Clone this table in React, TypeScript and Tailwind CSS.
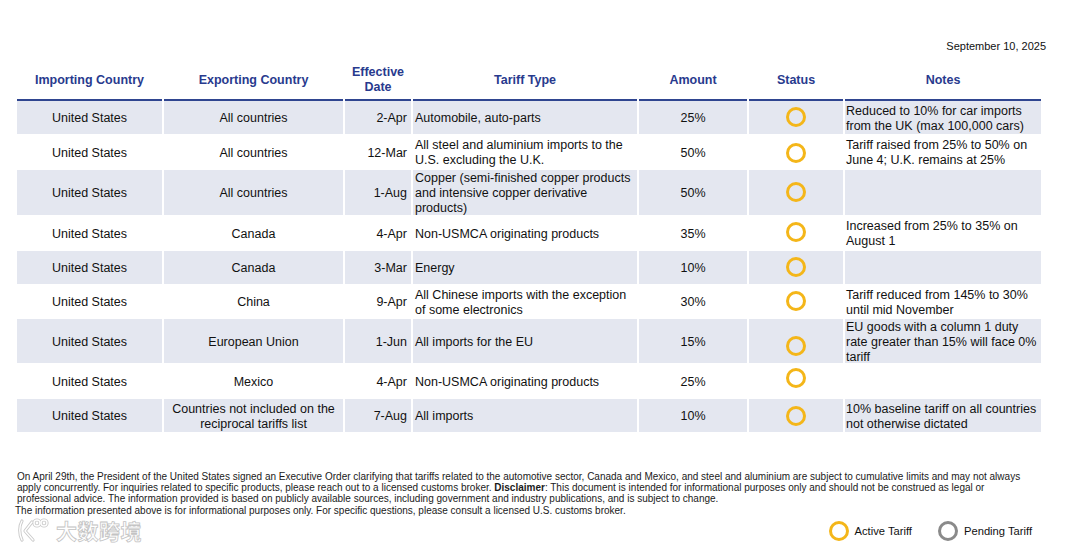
import React from 'react';

type Row = {
    imp: string;
    exp: string[];
    date: string;
    type: string[];
    amt: string;
    notes: string[];
    h: string;
    ring: string;
};

const rows: Row[] = [
    { imp: 'United States', exp: ['All countries'], date: '2-Apr', type: ['Automobile, auto-parts'], amt: '25%', notes: ['Reduced to 10% for car imports', 'from the UK (max 100,000 cars)'], h: 'h-[33px]', ring: '-mt-[4px]' },
    { imp: 'United States', exp: ['All countries'], date: '12-Mar', type: ['All steel and aluminium imports to the', 'U.S. excluding the U.K.'], amt: '50%', notes: ['Tariff raised from 25% to 50% on', 'June 4; U.K. remains at 25%'], h: 'h-[36px]', ring: '-mt-[1px]' },
    { imp: 'United States', exp: ['All countries'], date: '1-Aug', type: ['Copper (semi-finished copper products', 'and intensive copper derivative', 'products)'], amt: '50%', notes: [], h: 'h-[45px]', ring: '-mt-[4px]' },
    { imp: 'United States', exp: ['Canada'], date: '4-Apr', type: ['Non-USMCA originating products'], amt: '35%', notes: ['Increased from 25% to 35% on', 'August 1'], h: 'h-[36px]', ring: '-mt-[4px]' },
    { imp: 'United States', exp: ['Canada'], date: '3-Mar', type: ['Energy'], amt: '10%', notes: [], h: 'h-[33px]', ring: '-mt-[4px]' },
    { imp: 'United States', exp: ['China'], date: '9-Apr', type: ['All Chinese imports with the exception', 'of some electronics'], amt: '30%', notes: ['Tariff reduced from 145% to 30%', 'until mid November'], h: 'h-[35px]', ring: '-mt-[4px]' },
    { imp: 'United States', exp: ['European Union'], date: '1-Jun', type: ['All imports for the EU'], amt: '15%', notes: ['EU goods with a column 1 duty', 'rate greater than 15% will face 0%', 'tariff'], h: 'h-[44px]', ring: 'mt-[7px]' },
    { imp: 'United States', exp: ['Mexico'], date: '4-Apr', type: ['Non-USMCA originating products'], amt: '25%', notes: [], h: 'h-[36px]', ring: '-mt-[8px]' },
    { imp: 'United States', exp: ['Countries not included on the', 'reciprocal tariffs list'], date: '7-Aug', type: ['All imports'], amt: '10%', notes: ['10% baseline tariff on all countries', 'not otherwise dictated'], h: 'h-[33px]', ring: '-mt-[2px]' },
];

const Lines = ({ lines }: { lines: string[] }) => (
    <div>
        {lines.map((l) => (
            <div key={l} className="whitespace-nowrap">{l}</div>
        ))}
    </div>
);

const Ring = ({ color, className = '' }: { color: string; className?: string }) => (
    <div className={`w-5 h-5 rounded-full border-[3px] ${color} ${className}`} />
);

function Watermark() {
    return (
        <div className="flex items-center gap-[6px] opacity-90">
            <svg width="34" height="26" viewBox="0 0 34 26" fill="none">
                <g stroke="#c4c4c4" strokeWidth="3.2" strokeLinecap="round" strokeLinejoin="round">
                    <path d="M6 4 C3 9 3 17 6 23" />
                    <path d="M16 5 L9 14 L17 23" />
                    <circle cx="21" cy="6" r="3" />
                    <circle cx="28" cy="6" r="3" />
                </g>
                <g stroke="#ffffff" strokeWidth="1.4" strokeLinecap="round" strokeLinejoin="round">
                    <path d="M6 4 C3 9 3 17 6 23" />
                    <path d="M16 5 L9 14 L17 23" />
                    <circle cx="21" cy="6" r="3" />
                    <circle cx="28" cy="6" r="3" />
                </g>
            </svg>
            <span className="font-['Noto_Sans_CJK_SC',sans-serif] text-[21px] leading-[26px] font-bold text-white [-webkit-text-stroke:0.8px_#bdbdbd] tracking-[0.5px]">
                大数跨境
            </span>
        </div>
    );
}

export default function App() {
    const headers: string[][] = [
        ['Importing Country'],
        ['Exporting Country'],
        ['Effective', 'Date'],
        ['Tariff Type'],
        ['Amount'],
        ['Status'],
        ['Notes'],
    ];

    return (
        <div className="w-[1080px] h-[551px] bg-white text-[#111] font-['Liberation_Sans',Arial,sans-serif] flex flex-col overflow-hidden">
            {/* Date */}
            <div className="flex justify-end pt-[39px] pr-[34px] text-[11px] leading-[14px]">
                September 10, 2025
            </div>

            {/* Tariff table */}
            <div className="mt-[8px] ml-[17px] grid grid-cols-[145px_179px_66px_224px_108px_94px_196px] gap-x-[2px] text-[12.5px] leading-[15px]">
                {headers.map((h) => (
                    <div
                        key={h.join()}
                        className="h-[40px] border-b-2 border-[#2f4590] flex items-center justify-center text-center font-bold text-[#283a8e]"
                    >
                        <Lines lines={h} />
                    </div>
                ))}

                {rows.map((r, i) => {
                    const bg = i % 2 === 0 ? 'bg-[#e4e7f0]' : 'bg-white';
                    return (
                        <React.Fragment key={i}>
                            <div className={`${r.h} ${bg} pt-[2px] flex items-center justify-center`}>{r.imp}</div>
                            <div className={`${r.h} ${bg} pt-[2px] flex items-center justify-center text-center`}>
                                <Lines lines={r.exp} />
                            </div>
                            <div className={`${r.h} ${bg} pt-[2px] flex items-center justify-end pr-[4px]`}>{r.date}</div>
                            <div className={`${r.h} ${bg} pt-[2px] flex items-center pl-[2px]`}>
                                <Lines lines={r.type} />
                            </div>
                            <div className={`${r.h} ${bg} pt-[2px] flex items-center justify-center`}>{r.amt}</div>
                            <div className={`${r.h} ${bg} pt-[2px] flex items-center justify-center`}>
                                <Ring color="border-[#f4b619]" className={r.ring} />
                            </div>
                            <div className={`${r.h} ${bg} pt-[2px] flex items-center pl-[1px]`}>
                                <Lines lines={r.notes} />
                            </div>
                        </React.Fragment>
                    );
                })}
            </div>

            {/* Footnotes */}
            <div className="mt-[39px] ml-[17px] text-[10px] leading-[11px] text-[#1a1a1a]">
                <div className="whitespace-nowrap">
                    On April 29th, the President of the United States signed an Executive Order clarifying that tariffs related to the automotive sector, Canada and Mexico, and steel and aluminium are subject to cumulative limits and may not always
                </div>
                <div className="whitespace-nowrap">
                    apply concurrently. For inquiries related to specific products, please reach out to a licensed customs broker. <b>Disclaimer</b>: This document is intended for informational purposes only and should not be construed as legal or
                </div>
                <div className="whitespace-nowrap">
                    professional advice. The information provided is based on publicly available sources, including government and industry publications, and is subject to change.
                </div>
            </div>
            <div className="mt-[1px] ml-[15px] text-[10px] leading-[12px] text-[#1a1a1a] whitespace-nowrap">
                The information presented above is for informational purposes only. For specific questions, please consult a licensed U.S. customs broker.
            </div>

            {/* Bottom: watermark + legend */}
            <div className="flex items-center justify-between pl-[16px] pr-[48px]">
                <Watermark />
                <div className="flex items-center gap-[26px] text-[11.2px] leading-[14px] pt-[1px]">
                    <div className="flex items-center gap-[6px]">
                        <Ring color="border-[#f4b619]" />
                        <span>Active Tariff</span>
                    </div>
                    <div className="flex items-center gap-[6px]">
                        <Ring color="border-[#8a8a8a]" />
                        <span>Pending Tariff</span>
                    </div>
                </div>
            </div>
        </div>
    );
}
